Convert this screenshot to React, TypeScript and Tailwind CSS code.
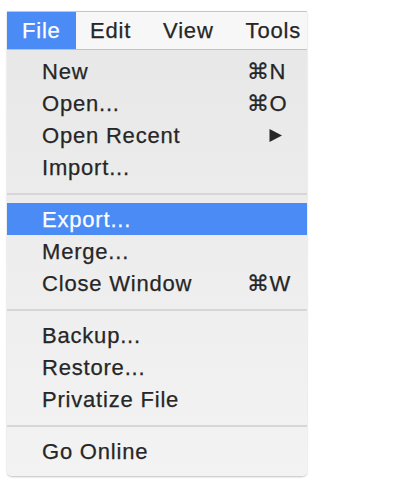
import React from "react";

type Item =
  | { kind: "item"; label: string; shortcut?: string; submenu?: boolean; active?: boolean }
  | { kind: "sep" };

const items: Item[] = [
  { kind: "item", label: "New", shortcut: "⌘N" },
  { kind: "item", label: "Open...", shortcut: "⌘O" },
  { kind: "item", label: "Open Recent", submenu: true },
  { kind: "item", label: "Import..." },
  { kind: "sep" },
  { kind: "item", label: "Export...", active: true },
  { kind: "item", label: "Merge..." },
  { kind: "item", label: "Close Window", shortcut: "⌘W" },
  { kind: "sep" },
  { kind: "item", label: "Backup..." },
  { kind: "item", label: "Restore..." },
  { kind: "item", label: "Privatize File" },
  { kind: "sep" },
  { kind: "item", label: "Go Online" },
];

export default function App() {
  return (
    <div className="min-h-[495px] w-[403px] bg-white pl-[7px] pt-[11px] font-['Liberation_Sans','DejaVu_Sans',sans-serif] text-[22px] tracking-[0.8px] text-[#262626] [-webkit-text-stroke:0.25px]">
      <div className="w-[300px] overflow-hidden rounded-b-[5px] shadow-[0_1px_2px_rgba(0,0,0,0.25)]">
        {/* menu bar */}
        <div className="flex h-[39px] items-stretch overflow-hidden whitespace-nowrap border-y border-t-[#c6c6c6] border-b-[#c2c2c2] bg-[#f7f7f7]">
          <div className="flex w-[69px] shrink-0 items-center bg-[#4a8bf6] pl-[15px] text-white">File</div>
          <div className="flex items-center gap-[32px] pl-[14px]">
            <span>Edit</span>
            <span>View</span>
            <span>Tools</span>
          </div>
        </div>
        {/* menu body */}
        <div className="bg-gradient-to-b from-[#e8e8e8] to-[#f3f3f3] pb-[9px] pt-[5px]">
          {items.map((it, i) =>
            it.kind === "sep" ? (
              <div key={i} className="pb-[8px] pt-[10px]">
                <div className="h-[2px] bg-[#d6d6d6]" />
              </div>
            ) : (
              <div
                key={i}
                className={
                  "flex h-[32px] items-center whitespace-nowrap " +
                  (it.active ? "bg-[#4a8bf6] text-white" : "")
                }
              >
                <span className="flex-1 pl-[35px]">{it.label}</span>
                <span className="flex w-[60px] items-center">
                  {it.shortcut ? (
                    <span className="tracking-[0.5px]">{it.shortcut}</span>
                  ) : it.submenu ? (
                    <svg className="ml-[21px]" width="15" height="15" viewBox="0 0 15 15">
                      <polygon points="1.5,1 14,7.5 1.5,14" fill="#262626" />
                    </svg>
                  ) : null}
                </span>
              </div>
            )
          )}
        </div>
      </div>
    </div>
  );
}
